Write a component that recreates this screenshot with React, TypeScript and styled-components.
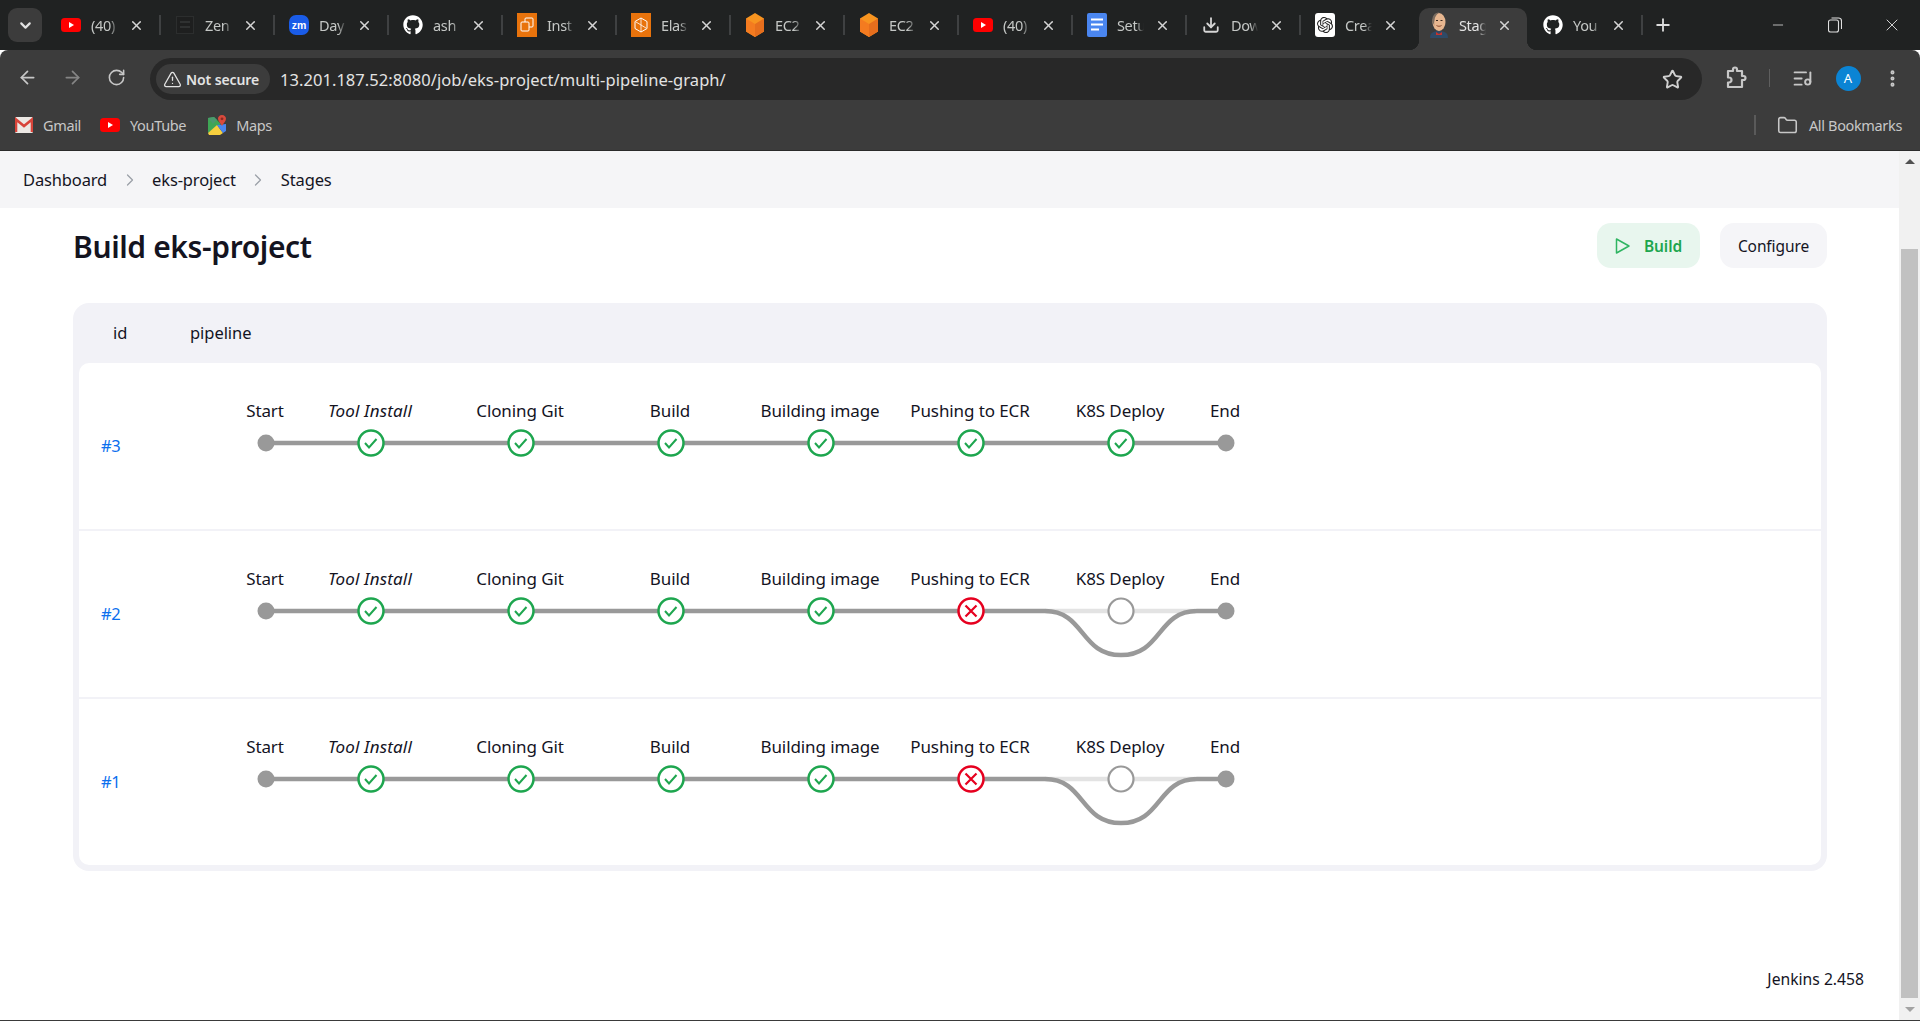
import React from 'react';
import styled, { createGlobalStyle } from 'styled-components';
import { ArrowLeft, ArrowRight, RotateCw, TriangleAlert, Star, ListMusic, EllipsisVertical, ChevronDown, ChevronRight, X, Plus, Minus, Folder, Download } from 'lucide-react';
import { FaGithub } from 'react-icons/fa';
import { SiOpenai } from 'react-icons/si';

const UI = `"Noto Sans", "Open Sans", "Liberation Sans", sans-serif`;

const Global = createGlobalStyle`
  html, body { margin: 0; padding: 0; height: 100%; overflow: hidden; background: #fff; }
  body { font-family: ${UI}; }
  * { box-sizing: border-box; }
`;

const Page = styled.div`
  width: 1920px; height: 1021px; display: flex; flex-direction: column; overflow: hidden;
  border-bottom: 1px solid #3a3a3a;
`;

/* ---------- Browser chrome ---------- */
const TabStrip = styled.div`
  height: 50px; flex: none; background: #202222; display: flex; align-items: center; padding-left: 8px; position: relative;
`;
const TabSearch = styled.div`
  width: 34px; height: 34px; margin-right: 5px; border-radius: 9px; background: #3c3c3c; color: #e3e3e3;
  display: flex; align-items: center; justify-content: center;
`;
const Tab = styled.div<{ $active?: boolean; $sep?: boolean }>`
  width: 114px; height: 50px; flex: none; display: flex; align-items: center; padding-left: 14px; position: relative;
  color: ${p => (p.$active ? '#e3e3e3' : '#c4c7c5')};
  &::after {
    content: ''; display: ${p => (p.$sep ? 'block' : 'none')}; position: absolute; right: 0; top: 15px; width: 2px; height: 20px; background: #3f4142;
  }
`;
const ActiveShape = styled.div`
  position: absolute; left: 4px; right: 2px; top: 8px; bottom: 0; background: #3c3c3c; border-radius: 10px 10px 0 0;
  &::before, &::after { content: ''; position: absolute; bottom: 0; width: 10px; height: 10px; }
  &::before { left: -10px; background: radial-gradient(circle at 0 0, transparent 10px, #3c3c3c 10.5px); }
  &::after { right: -10px; background: radial-gradient(circle at 100% 0, transparent 10px, #3c3c3c 10.5px); }
`;
const FavSlot = styled.div`
  width: 20px; height: 20px; flex: none; display: flex; align-items: center; justify-content: center; position: relative;
`;
const TabTitle = styled.div`
  margin-left: 10px; width: 33px; flex: none; overflow: hidden; white-space: nowrap; font-size: 14.5px; letter-spacing: -0.35px; position: relative;
  -webkit-mask-image: linear-gradient(90deg, #000 19px, transparent 27px);
  mask-image: linear-gradient(90deg, #000 19px, transparent 27px);
`;
const TabClose = styled.div`
  margin-left: 4px; width: 16px; height: 16px; flex: none; display: flex; align-items: center; justify-content: center; position: relative; color: #d5d5d5;
`;
const NewTab = styled.div`
  margin-left: 10px; width: 20px; display: flex; justify-content: center; color: #dcdcdc;
`;
const WindowControls = styled.div`
  margin-left: auto; display: flex; align-items: center; color: #e0e0e0; height: 50px;
`;
const WinBtn = styled.div`
  width: 57px; display: flex; justify-content: center;
`;
const Toolbar = styled.div`
  height: 50px; flex: none; background: #3c3c3c; display: flex; align-items: center; padding-left: 17px; border-radius: 8px 8px 0 0;
`;
const NavBtn = styled.div<{ $dim?: boolean }>`
  width: 45px; flex: none; display: flex; justify-content: flex-start; margin-top: 5px; color: ${p => (p.$dim ? '#858585' : '#c7c7c7')};
`;
const Omnibox = styled.div`
  margin-left: -2px; width: 1552px; flex: none; height: 42px; margin-top: 8px; border-radius: 21px; background: #282828; display: flex; align-items: center; padding-left: 6px;
`;
const Chip = styled.div`
  width: 114px; height: 30px; border-radius: 15px; background: #3c3c3c; color: #e3e3e3; display: flex; align-items: center; gap: 4px; padding-left: 7px; flex: none;
  font-size: 14px; font-weight: 600; letter-spacing: -0.1px; white-space: nowrap;
`;
const Url = styled.div`
  margin-left: 10px; color: #e3e3e3; font-size: 16.5px; letter-spacing: 0.05px; white-space: nowrap;
`;
const OmniEnd = styled.div`
  margin-left: auto; margin-right: 19px; color: #d0d0d0; display: flex;
`;
const ToolIcons = styled.div`
  display: flex; align-items: center; color: #c7c7c7; flex: 1; margin-top: 6px;
`;
const ToolIcon = styled.div<{ $w: number }>`
  width: ${p => p.$w}px; display: flex; justify-content: center; flex: none;
`;
const ToolSep = styled.div`
  width: 1px; height: 18px; background: #5f5f5f; flex: none;
`;
const Avatar = styled.div`
  width: 25px; height: 25px; border-radius: 50%; background: #0b84d4; color: #fff; font-size: 13px; display: flex; align-items: center; justify-content: center;
`;
const Bookmarks = styled.div`
  height: 51px; flex: none; background: #3c3c3c; border-bottom: 1px solid #2a2a2a; display: flex; align-items: center; padding-left: 15px;
`;
const Bookmark = styled.div<{ $gap: number }>`
  display: flex; align-items: center; color: #c7c7c7; font-size: 14.5px; letter-spacing: -0.35px; gap: 10px; margin-right: ${p => p.$gap}px;
`;
const BookmarkEnd = styled.div`
  margin-left: auto; display: flex; align-items: center; color: #c7c7c7; font-size: 14.5px; letter-spacing: -0.35px; padding-right: 18px; gap: 11px;
`;
const BookmarkSep = styled.div`
  width: 2px; height: 20px; background: #5a5a5a; margin-right: 10px;
`;

/* ---------- Jenkins page ---------- */
const Viewport = styled.div`
  flex: 1; display: flex; min-height: 0;
`;
const Main = styled.main`
  flex: 1; display: flex; flex-direction: column; background: #fff; color: #14141f; min-width: 0;
`;
const Breadcrumbs = styled.nav`
  height: 57px; flex: none; background: #f5f5f7; display: flex; align-items: center; padding-left: 23px; font-size: 16.5px; letter-spacing: -0.15px; color: #14141f;
`;
const Crumb = styled.span``;
const CrumbSep = styled.span`
  width: 45px; display: flex; justify-content: center; color: #9ba0a8;
`;
const Content = styled.div`
  flex: 1; display: flex; flex-direction: column; padding: 15px 72px 0 73px;
`;
const Heading = styled.div`
  display: flex; align-items: center; justify-content: space-between; height: 45px; margin-bottom: 35px;
`;
const Title = styled.h1`
  margin: 2px 0 0; font-size: 30px; font-weight: 600; letter-spacing: -0.38px; color: #14141f;
`;
const Actions = styled.div`
  display: flex; gap: 20px;
`;
const Button = styled.div<{ $primary?: boolean; $w: number }>`
  width: ${p => p.$w}px; height: 45px; border-radius: 14px; display: flex; align-items: center; justify-content: center; gap: 13px;
  font-size: 15.5px; letter-spacing: -0.1px;
  font-weight: ${p => (p.$primary ? 600 : 400)};
  background: ${p => (p.$primary ? '#e8f6ee' : '#f5f5f8')};
  color: ${p => (p.$primary ? '#1ea64f' : '#14141f')};
`;
const Table = styled.div`
  background: #f2f2f7; border-radius: 16px; padding: 0 6px 6px;
`;
const HeadRow = styled.div`
  height: 60px; display: flex; align-items: center; padding-bottom: 2px; font-size: 16.5px; letter-spacing: -0.05px;
`;
const HeadId = styled.div`
  width: 111px; padding-left: 34px;
`;
const HeadPipe = styled.div``;
const RowList = styled.div`
  display: flex; flex-direction: column; gap: 2px; border-radius: 10px; overflow: hidden;
`;
const Row = styled.div`
  height: 166px; background: #fff; display: flex;
`;
const RowId = styled.a`
  width: 161px; flex: none; padding: 71px 0 0 22px; color: #0b6fee; font-size: 16.5px; text-decoration: none; line-height: 24px; letter-spacing: -0.3px;
`;
const Footer = styled.footer`
  height: 51px; margin-top: auto; margin-right: -37px; display: flex; justify-content: flex-end; font-size: 15.7px; letter-spacing: 0; color: #14141f; line-height: 20px;
`;
const ScrollBar = styled.div`
  width: 21px; flex: none; background: #f1f1f1; display: flex; flex-direction: column; align-items: center; padding-bottom: 8px;
`;
const ScrollArrow = styled.div<{ $up?: boolean }>`
  flex: none; width: 0; height: 0; margin-top: ${p => (p.$up ? '8px' : '4px')};
  border-left: 5px solid transparent; border-right: 5px solid transparent;
  ${p => (p.$up ? 'border-bottom: 5px solid #505050;' : 'border-top: 5px solid #a3a3a3;')}
`;
const ScrollTrack = styled.div`
  flex: 1; width: 100%; padding: 0 2px; display: flex; flex-direction: column;
`;
const ScrollThumb = styled.div`
  width: 17px; margin-top: 85px; height: 749px; background: #c1c1c1;
`;

/* ---------- Drawings ---------- */
const Yt = () => (
  <svg width="20" height="14" viewBox="0 0 20 14"><rect width="20" height="14" rx="3.5" fill="#f00" /><path d="M8 4l5 3-5 3z" fill="#fff" /></svg>
);
const Zen = () => (
  <svg width="18" height="18" viewBox="0 0 18 18"><rect x=".5" y=".5" width="17" height="17" fill="#1e1f1f" stroke="#2c2e2e" /><rect x="4" y="5" width="10" height="2" fill="#2f3131" /><rect x="4" y="10" width="10" height="2" fill="#2f3131" /></svg>
);
const Zm = () => (
  <svg width="20" height="20" viewBox="0 0 20 20"><rect width="20" height="20" rx="7" fill="#1a5ce8" /><text x="10" y="13.5" textAnchor="middle" fontSize="10.5" fontWeight="700" fill="#fff" fontFamily="Liberation Sans, sans-serif">zm</text></svg>
);
const Aws1 = () => (
  <svg width="20" height="24" viewBox="0 0 20 24"><rect width="20" height="24" fill="#e8730c" /><rect x="8" y="5" width="8" height="9" rx="1" fill="none" stroke="#fff" /><rect x="4" y="9" width="8" height="9" rx="1" fill="#e8730c" stroke="#fff" /></svg>
);
const Aws2 = () => (
  <svg width="20" height="24" viewBox="0 0 20 24"><rect width="20" height="24" fill="#e8730c" /><path d="M10 5l6 3.500v7L10 19l-6-3.500v-7z" fill="none" stroke="#fff" /><path d="M10 5v14M5 9l10 6" stroke="#fff" strokeWidth=".8" /></svg>
);
const Cube = () => (
  <svg width="18" height="24" viewBox="0 0 18 24"><path d="M9 0l9 5.500v13L9 24 0 18.500v-13z" fill="#f79420" /><path d="M9 11L18 5.500v13L9 24z" fill="#e66e1d" /><path d="M9 11L0 5.500v13L9 24z" fill="#f47b20" /></svg>
);
const Doc = () => (
  <svg width="20" height="24" viewBox="0 0 20 24"><rect width="20" height="24" rx="2" fill="#4a86f0" /><path d="M4 6.500h12M4 11.500h12M4 16.500h8" stroke="#fff" strokeWidth="2" /></svg>
);
const Gpt = () => (
  <svg width="20" height="24" viewBox="0 0 20 24"><rect y="0" width="20" height="24" rx="3" fill="#fff" /><g transform="translate(2 4)"><SiOpenai size={16} color="#222" /></g></svg>
);
const JenkinsHead = () => (
  <svg width="20" height="26" viewBox="0 0 20 26">
    <path d="M1 26c0-5 3-7 9-7s9 2 9 7z" fill="#2f4a66" />
    <path d="M7 20l3 2 3-2v3H7z" fill="#c8322b" />
    <ellipse cx="10" cy="10" rx="6.500" ry="9" fill="#e7b690" />
    <path d="M3.500 10C2.500 4 6 0 10.500 .5 8 2 6 4 5.500 8.500 5 10 5 12 5.500 14z" fill="#7b6c5f" />
    <path d="M7 8.500h2M11.500 8.500h2" stroke="#3a2a20" strokeWidth="1.200" />
    <path d="M7.500 13.500c1.500 1 3.500 1 5 0" stroke="#8a4a30" fill="none" />
  </svg>
);
const Gmail = () => (
  <svg width="18" height="16" viewBox="0 0 18 16"><rect width="18" height="16" rx="1.500" fill="#ece8e4" /><path d="M1 15V2.500L9 9l8-6.500V15" fill="none" stroke="#d8443a" strokeWidth="2.600" /></svg>
);
const Maps = () => (
  <svg width="18" height="20" viewBox="0 0 18 20">
    <path d="M0 3l6-1 7 7-13 9z" fill="#3fa655" />
    <path d="M0 18L9 10l6 8-3 2H1z" fill="#f7cf3e" />
    <path d="M9 10l6 8 3-2V9z" fill="#4a86f0" />
    <path d="M0 3l6-1 3 3-4 4z" fill="#4a9a6e" />
    <path d="M14 0c2.500 0 4 1.800 4 3.800 0 2.700-3 4.700-4 7.200-1-2.500-4-4.500-4-7.200C10 1.800 11.500 0 14 0z" fill="#d94a3c" />
    <circle cx="14" cy="3.800" r="1.400" fill="#8c2a22" />
  </svg>
);
const PuzzleIcon = () => (
  <svg width="22" height="24" viewBox="0 0 22 24" fill="none" stroke="#c7c7c7" strokeWidth="2.200" strokeLinejoin="round">
    <path d="M3 5h5V3.500a2 2 0 0 1 4 0V5h5v5h1.500a2 2 0 0 1 0 4H17v7H3v-4.500h1a2.500 2.500 0 0 0 0-5H3z" />
  </svg>
);
const RestoreIcon = () => (
  <svg width="14" height="16" viewBox="0 0 14 16" fill="none" stroke="#e0e0e0" strokeWidth="1.100">
    <rect x=".5" y="3" width="10" height="12" rx="2" />
    <path d="M3.500 1h7a3 3 0 0 1 3 3v8" />
  </svg>
);
const PlayIcon = () => (
  <svg width="16" height="18" viewBox="0 0 16 18" fill="none" stroke="#2fb562" strokeWidth="1.500" strokeLinejoin="round"><path d="M1.500 2v14L14 9z" /></svg>
);

const STAGES: [string, number][] = [
  ['Start', 26], ['Tool Install', 131], ['Cloning Git', 281], ['Build', 431],
  ['Building image', 581], ['Pushing to ECR', 731], ['K8S Deploy', 881], ['End', 986],
];

const GraphText = styled.text<{ $italic?: boolean }>`
  font-family: ${UI}; font-size: 17px; letter-spacing: ${p => (p.$italic ? '0.15px' : '-0.1px')}; fill: #14141f; text-anchor: middle;
  font-style: ${p => (p.$italic ? 'italic' : 'normal')};
`;

const Ok = ({ x }: { x: number }) => (
  <g>
    <circle cx={x} cy={80} r={12.5} fill="#fff" stroke="#1ea64f" strokeWidth={2.5} />
    <path d={`M${x - 6} ${80} l4 4.500 l7.500 -8.500`} fill="none" stroke="#1ea64f" strokeWidth={2} />
  </g>
);
const Fail = ({ x }: { x: number }) => (
  <g>
    <circle cx={x} cy={80} r={12.5} fill="#fff" stroke="#e6001f" strokeWidth={2.5} />
    <path d={`M${x - 5.500} 74.500 l11 11 m0 -11 l-11 11`} fill="none" stroke="#e6001f" strokeWidth={2.200} />
  </g>
);

const Pipeline = ({ failed }: { failed: boolean }) => (
  <svg width="1040" height="166" viewBox="0 0 1040 166">
    {failed ? (
      <>
        <path d="M26 80H805" stroke="#999" strokeWidth="4.500" fill="none" />
        <path d="M805 80H955" stroke="#e3e3e3" strokeWidth="4.500" fill="none" />
        <path d="M805 80C845 80 840 124 881 124C922 124 917 80 957 80H986" stroke="#999" strokeWidth="4.500" fill="none" />
      </>
    ) : (
      <path d="M26 80H986" stroke="#999" strokeWidth="4.500" fill="none" />
    )}
    {STAGES.map(([name, x], i) => (
      <GraphText key={name} x={x === 26 ? 25 : x === 986 ? 985 : x - 1} y={54} $italic={i === 1}>{name}</GraphText>
    ))}
    <circle cx={26} cy={80} r={8.500} fill="#999" />
    <circle cx={986} cy={80} r={8.500} fill="#999" />
    {[131, 281, 431, 581].map(x => <Ok key={x} x={x} />)}
    {failed ? <Fail x={731} /> : <Ok x={731} />}
    {failed ? (
      <circle cx={881} cy={80} r={12.500} fill="#fff" stroke="#999" strokeWidth={2.200} />
    ) : <Ok x={881} />}
  </svg>
);

const TABS: { t: string; i: React.ReactNode }[] = [
  { t: '(40)', i: <Yt /> },
  { t: 'Zen', i: <Zen /> },
  { t: 'Day', i: <Zm /> },
  { t: 'ash', i: <FaGithub size={20} color="#fff" /> },
  { t: 'Inst', i: <Aws1 /> },
  { t: 'Elas', i: <Aws2 /> },
  { t: 'EC2', i: <Cube /> },
  { t: 'EC2', i: <Cube /> },
  { t: '(40)', i: <Yt /> },
  { t: 'Setu', i: <Doc /> },
  { t: 'Dow', i: <Download size={18} color="#d5d5d5" strokeWidth={2.400} /> },
  { t: 'Crea', i: <Gpt /> },
  { t: 'Stag', i: <JenkinsHead /> },
  { t: 'You', i: <FaGithub size={20} color="#fff" /> },
];

export default function App() {
  return (
    <Page>
      <Global />
      <TabStrip>
        <TabSearch><ChevronDown size={17} strokeWidth={3} /></TabSearch>
        {TABS.map((tab, i) => (
          <Tab key={i} $active={i === 12} $sep={i !== 11 && i !== 12}>
            {i === 12 && <ActiveShape />}
            <FavSlot>{tab.i}</FavSlot>
            <TabTitle>{tab.t}</TabTitle>
            <TabClose><X size={15} strokeWidth={2.400} /></TabClose>
          </Tab>
        ))}
        <NewTab><Plus size={20} strokeWidth={2.200} /></NewTab>
        <WindowControls>
          <WinBtn><Minus size={16} strokeWidth={1.200} /></WinBtn>
          <WinBtn><RestoreIcon /></WinBtn>
          <WinBtn><X size={20} strokeWidth={1.100} /></WinBtn>
        </WindowControls>
      </TabStrip>
      <Toolbar>
        <NavBtn><ArrowLeft size={21} strokeWidth={2} /></NavBtn>
        <NavBtn $dim><ArrowRight size={21} strokeWidth={2} /></NavBtn>
        <NavBtn><RotateCw size={19} strokeWidth={2} /></NavBtn>
        <Omnibox>
          <Chip><TriangleAlert size={19} strokeWidth={1.600} />Not secure</Chip>
          <Url>13.201.187.52:8080/job/eks-project/multi-pipeline-graph/</Url>
          <OmniEnd><Star size={21} strokeWidth={2.200} /></OmniEnd>
        </Omnibox>
        <ToolIcons>
          <ToolIcon $w={67}><PuzzleIcon /></ToolIcon>
          <ToolSep />
          <ToolIcon $w={64}><ListMusic size={21} strokeWidth={2.200} /></ToolIcon>
          <ToolIcon $w={28}><Avatar>A</Avatar></ToolIcon>
          <ToolIcon $w={60}><EllipsisVertical size={21} strokeWidth={2.600} /></ToolIcon>
        </ToolIcons>
      </Toolbar>
      <Bookmarks>
        <Bookmark $gap={19}><Gmail />Gmail</Bookmark>
        <Bookmark $gap={22}><Yt />YouTube</Bookmark>
        <Bookmark $gap={0}><Maps />Maps</Bookmark>
        <BookmarkEnd>
          <BookmarkSep />
          <Folder size={21} strokeWidth={1.800} />
          All Bookmarks
        </BookmarkEnd>
      </Bookmarks>
      <Viewport>
        <Main>
          <Breadcrumbs>
            <Crumb>Dashboard</Crumb>
            <CrumbSep><ChevronRight size={20} strokeWidth={1.500} /></CrumbSep>
            <Crumb>eks-project</Crumb>
            <CrumbSep><ChevronRight size={20} strokeWidth={1.500} /></CrumbSep>
            <Crumb>Stages</Crumb>
          </Breadcrumbs>
          <Content>
            <Heading>
              <Title>Build eks-project</Title>
              <Actions>
                <Button $primary $w={103}><PlayIcon />Build</Button>
                <Button $w={107}>Configure</Button>
              </Actions>
            </Heading>
            <Table>
              <HeadRow>
                <HeadId>id</HeadId>
                <HeadPipe>pipeline</HeadPipe>
              </HeadRow>
              <RowList>
                {[3, 2, 1].map(n => (
                  <Row key={n}>
                    <RowId>#{n}</RowId>
                    <Pipeline failed={n !== 3} />
                  </Row>
                ))}
              </RowList>
            </Table>
            <Footer>Jenkins 2.458</Footer>
          </Content>
        </Main>
        <ScrollBar>
          <ScrollArrow $up />
          <ScrollTrack><ScrollThumb /></ScrollTrack>
          <ScrollArrow />
        </ScrollBar>
      </Viewport>
    </Page>
  );
}
